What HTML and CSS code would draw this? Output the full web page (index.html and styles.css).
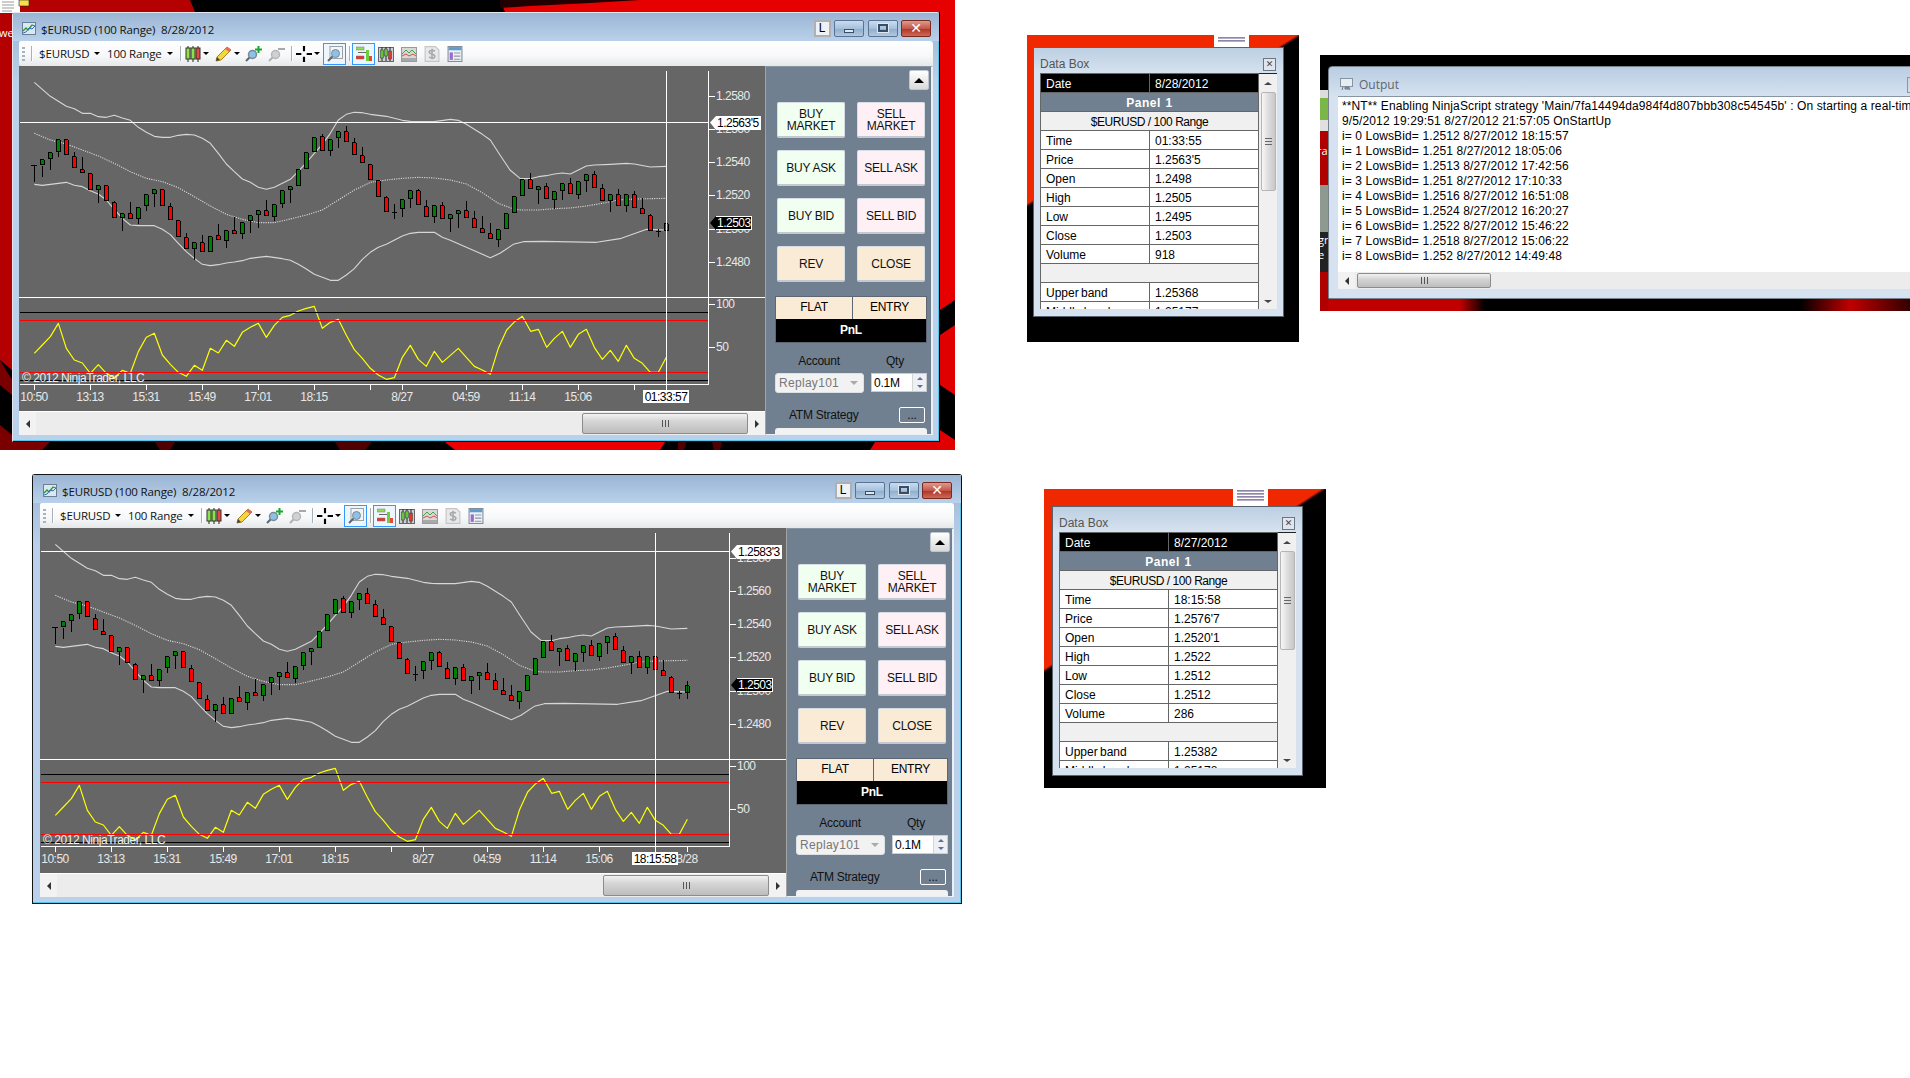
FILE: index.html
```html
<!DOCTYPE html>
<html lang="en">
<head>
<meta charset="utf-8">
<title>NinjaTrader charts</title>
<link rel="stylesheet" href="styles.css">
</head>
<body>
<svg class="defs" aria-hidden="true">
  <defs>
    <g id="series">
      <path class="band" d="M103 247L127 268 151 289 199 319 223 326 247 340 271 340 295 350 319 352 343 346 367 354 391 361 415 382 439 397 463 409 487 412 511 412 535 406 559 403 583 405 607 415 631 430 655 460 679 492 703 515 727 537 751 547 775 562 799 568 823 562 847 550 871 538 895 514 919 488 943 460 967 433 991 400 1015 360 1039 343 1063 337 1087 338 1111 343 1135 346 1159 349 1183 355 1207 361 1231 364 1255 365 1303 365 1351 358 1375 361 1399 373 1423 388 1447 403 1471 420 1500 465 1530 510 1560 535 1591 536 1615 530 1639 527 1663 522 1687 519 1711 522 1735 510 1759 498 1783 495 1831 493 1879 490 1903 492 1951 501 1999 499"/>
      <path class="band mid" d="M103 400L151 420 199 432 247 450 295 468 343 490 391 515 439 535 487 545 535 563 583 590 631 618 679 643 727 658 775 668 823 668 871 657 919 645 967 630 1015 600 1063 570 1111 547 1159 540 1207 535 1255 532 1303 534 1351 540 1399 552 1447 578 1495 610 1543 628 1567 630 1615 630 1663 626 1711 624 1759 618 1807 610 1855 600 1903 597 1999 595"/>
      <path class="band" d="M103 553L127 556 151 553 199 547 223 556 247 560 271 572 295 582 319 600 343 628 367 655 391 675 415 677 463 677 487 688 511 704 535 730 559 755 583 775 607 793 631 797 655 794 679 789 703 786 727 782 751 775 799 769 847 776 871 781 895 793 919 807 943 823 967 832 991 841 1015 841 1039 825 1063 806 1087 778 1111 757 1135 742 1159 733 1207 708 1231 700 1255 697 1303 697 1327 712 1351 721 1399 742 1447 763 1471 773 1500 760 1540 733 1570 725 1630 724 1790 727 1860 716 1940 688 1998 690"/>
      <path class="wick" d="M103 497V545M94 497h18M127 497V530M151 478V510M175 457V470M223 457V469M247 472V508M295 571V608M343 604V607M367 655V692M391 606V640M415 658V672M439 619V632M463 583V620M511 610V619M559 700V712M583 748V780M607 705V727M655 672V706M679 724V744M703 651V691M727 703V717M751 664V698M775 646V683M799 600V631M823 652V664M847 613V624M871 571V608M967 403V409M991 454V468M1015 415V444M1039 379V394M1063 415V427M1087 442V466M1159 588V592M1183 613V656M1175 638h17M1207 628V650M1231 598V623M1255 567V571M1279 600V619M1303 652V668M1327 606V616M1351 658V696M1375 643V684M1399 604V631M1423 633V655M1447 649V685M1471 670V700M1495 721V740M1591 519V538M1615 571V612M1639 550V559M1663 601V628M1687 574V600M1711 535V550M1735 586V597M1759 544V576M1783 514V523M1807 553V565M1831 604V636M1855 568V583M1879 619V636M1903 574V583M1927 595V625M1951 643V646M1975 688V710M1967 694h16"/>
      <path class="body up" d="M121 479h12v16h-12zM145 458h12v18h-12zM169 419h12v36h-12zM289 557h12v12h-12zM361 641h12v12h-12zM409 623h12v33h-12zM433 584h12v33h-12zM457 569h12v12h-12zM577 728h12v18h-12zM625 710h12v45h-12zM673 692h12v30h-12zM721 668h12v33h-12zM745 647h12v15h-12zM769 632h12v12h-12zM817 614h12v36h-12zM841 572h12v39h-12zM865 560h12v9h-12zM889 509h12v48h-12zM913 458h12v48h-12zM937 413h12v42h-12zM985 419h12v33h-12zM1009 395h12v18h-12zM1201 599h12v27h-12zM1225 572h12v24h-12zM1297 617h12v33h-12zM1345 644h12v12h-12zM1369 632h12v9h-12zM1489 689h12v30h-12zM1513 641h12v45h-12zM1537 590h12v48h-12zM1561 539h12v48h-12zM1609 560h12v9h-12zM1657 575h12v24h-12zM1681 551h12v21h-12zM1729 545h12v39h-12zM1753 524h12v18h-12zM1825 584h12v18h-12zM1873 584h12v33h-12zM1993 671h12v21h-12z"/>
      <path class="body down" d="M193 419h12v45h-12zM217 470h12v33h-12zM241 509h12v9h-12zM265 521h12v48h-12zM313 557h12v45h-12zM337 608h12v45h-12zM385 641h12v15h-12zM481 569h12v48h-12zM505 620h12v39h-12zM529 662h12v48h-12zM553 713h12v33h-12zM601 728h12v27h-12zM649 707h12v12h-12zM697 692h12v9h-12zM793 632h12v15h-12zM961 410h12v42h-12zM1033 395h12v30h-12zM1057 428h12v36h-12zM1081 467h12v21h-12zM1105 494h12v45h-12zM1129 542h12v48h-12zM1153 593h12v42h-12zM1249 572h12v42h-12zM1273 620h12v30h-12zM1321 617h12v39h-12zM1393 632h12v21h-12zM1417 656h12v27h-12zM1441 686h12v12h-12zM1465 701h12v15h-12zM1585 539h12v27h-12zM1633 560h12v36h-12zM1705 551h12v30h-12zM1777 524h12v39h-12zM1801 566h12v36h-12zM1849 584h12v33h-12zM1897 584h12v39h-12zM1921 626h12v15h-12zM1945 647h12v45h-12z"/>
      <path class="rsi" transform="translate(0 840)" d="M103 220L127 195 151 170 175 130 199 205 223 240 247 249 271 280 295 254 319 280 343 294 367 271 391 280 415 215 439 172 463 160 487 225 511 253 535 277 559 289 583 256 607 271 631 205 655 219 679 181 703 199 727 157 751 142 775 130 799 172 823 136 847 112 871 106 895 93 919 85 943 79 967 145 991 127 1015 118 1039 166 1063 209 1087 235 1111 265 1135 285 1159 298 1183 293 1207 232 1231 196 1255 238 1279 259 1303 214 1327 247 1351 226 1375 205 1399 232 1423 259 1447 270 1471 283 1495 205 1520 150 1544 125 1567 109 1592 154 1615 148 1640 202 1663 175 1687 154 1711 202 1735 163 1759 148 1783 202 1807 238 1831 211 1855 244 1879 196 1903 235 1927 250 1951 277 1975 277 1999 232"/>
    </g>
    <g id="chart-frame">
      <path class="ln-white" d="M0 231.5H746M689.5 5V318.5H1M690 30.5h6M690 96.5h6M690 129.5h6M690 196.5h6M690 63.5h6M690 163.5h6M690 238.5h6M690 281.5h6M15.5 318v6M71.5 318v6M127.5 318v6M183.5 318v6M239.5 318v6M295.5 318v6M351.5 318v6M383.5 318v6M447.5 318v6M503.5 318v6M559.5 318v6M615.5 318v6"/>
      <path class="ln-black" d="M1 246.5H689M1 314.5H689"/>
      <path class="ln-red" d="M1 254.5H689M1 306.5H689"/>
    </g>
    <symbol id="ic-title" viewBox="0 0 14 13"><rect x=".5" y=".5" width="13" height="12" fill="#dce7f2" stroke="#6a7f95"/><path d="M1 9l3-3 2 2 4-5 3 1" fill="none" stroke="#2a9a30" stroke-width="1.3"/><path d="M1 11l3-1 3-4 3 1 3-3" fill="none" stroke="#2e6fc0"/></symbol>
    <symbol id="ic-candles" viewBox="0 0 16 16"><path d="M3 0v16M8 0v16M13 0v16" stroke="#222"/><rect x="1" y="2" width="4" height="11" fill="#8be24a" stroke="#333"/><rect x="6" y="2" width="4" height="11" fill="#8be24a" stroke="#333"/><rect x="11" y="2" width="4" height="11" fill="#e5493c" stroke="#333"/></symbol>
    <symbol id="ic-pencil" viewBox="0 0 17 16"><path d="M1 15l1-4L12 1l4 3L6 14z" fill="#f6d73a" stroke="#a5812a"/><path d="M12 1l4 3-2 2-4-3z" fill="#e56a5a"/><path d="M1 15l1-4 3 3z" fill="#444"/></symbol>
    <symbol id="ic-zoomin" viewBox="0 0 17 16"><circle cx="7.500" cy="8.500" r="4" fill="#8fc0e6" stroke="#7c8a96" stroke-width="1.500"/><path d="M4.500 11.500L1 15" stroke="#5c6770" stroke-width="2"/><path d="M13.500 0v7M10 3.500h7" stroke="#16a830" stroke-width="2"/></symbol>
    <symbol id="ic-zoomout" viewBox="0 0 17 16"><circle cx="7.500" cy="8.500" r="4" fill="#cfd2d4" stroke="#b5b8ba" stroke-width="1.500"/><path d="M4.500 11.500L1 15" stroke="#b0b0b0" stroke-width="2"/><path d="M10 3h7" stroke="#a8a8a8" stroke-width="2"/></symbol>
    <symbol id="ic-cross" viewBox="0 0 15 15"><path d="M7.500 0v5M7.500 10v5M0 7.500h5M10 7.500h5" stroke="#000" stroke-width="2"/></symbol>
    <symbol id="ic-mag" viewBox="0 0 16 16"><rect x="3" y=".5" width="12.500" height="12" fill="#f2f4f6" stroke="#9aa2aa"/><circle cx="8.500" cy="7.500" r="4" fill="#8fc0e6" stroke="#7c8a96"/><path d="M5.500 10.500L1 15" stroke="#5c6770" stroke-width="2"/></symbol>
    <symbol id="ic-orders" viewBox="0 0 16 16"><rect x="0" y="1" width="8" height="3" fill="#8be24a" stroke="#777" stroke-width=".5"/><rect x="0" y="10" width="8" height="3" fill="#e5352c" stroke="#777" stroke-width=".5"/><path d="M2 6.500h9" stroke="#666"/><rect x="10" y="4" width="3" height="11" fill="#6ccf40"/><rect x="13" y="10" width="3" height="5" fill="#e5493c"/></symbol>
    <symbol id="ic-candles2" viewBox="0 0 16 16"><rect x=".5" y="1.500" width="15" height="14" fill="#ccd0d4" stroke="#666"/><path d="M4 1v14M8 1v14M12 1v14" stroke="#222"/><rect x="2.500" y="4" width="3" height="8" fill="#62c63a" stroke="#333" stroke-width=".5"/><rect x="6.500" y="3" width="3" height="7" fill="#62c63a" stroke="#333" stroke-width=".5"/><rect x="10.500" y="5" width="3" height="8" fill="#e5352c" stroke="#333" stroke-width=".5"/></symbol>
    <symbol id="ic-area" viewBox="0 0 16 16"><rect x=".5" y="1.500" width="15" height="14" fill="#d8d8d8" stroke="#9a9a9a"/><path d="M1 8l4-4 3 3 3-3 4 4" fill="none" stroke="#3ea83e"/><path d="M1 10l4-2 3 2 4-2 3 2" fill="none" stroke="#d0524a"/><rect x="1" y="12" width="14" height="3" fill="#a9a9a9"/></symbol>
    <symbol id="ic-dollar" viewBox="0 0 13 14"><path d="M.5.500h9l3 3v10H.500z" fill="#e9e9e9" stroke="#c5c5c5"/><path d="M9 4.500C8 3.500 4 3.500 4 5.500s5 1 5 3.500-4 1.500-5 .5M6.500 2.500v9" fill="none" stroke="#a9a9a9" stroke-width="1.400"/></symbol>
    <symbol id="ic-table" viewBox="0 0 14 15"><rect x=".5" y=".5" width="13" height="14" fill="#eef1f5" stroke="#7f8c99"/><rect x="1" y="1" width="12" height="3" fill="#5f9ccb"/><rect x="2" y="6" width="3" height="7" fill="#9a6ad0"/><path d="M6 6.500h6M6 9.500h6M6 12.500h6" stroke="#8a97a5"/></symbol>
    <symbol id="ic-output" viewBox="0 0 13 13"><rect x=".5" y=".5" width="12" height="8" fill="#e7edf3" stroke="#8795a3"/><path d="M3 9l-1 3M8 9l2 3M5 9h4v2H5z" fill="#8795a3" stroke="#6f7c88"/></symbol>
  </defs>
</svg>

<div class="desktop">
  <svg class="desktop-art" width="955" height="450" viewBox="0 0 955 450" aria-hidden="true">
    <rect width="955" height="450" fill="#000"/>
    <path d="M0 0H190L195 12H12V370L0 360z" fill="#b40000"/>
    <path d="M0 360L12 380V395L0 385zM0 425L12 435V442H50L42 450H0z" fill="#7a0000"/>
    <path d="M500 0H955V300L940 310V12H505z" fill="#e60000"/>
    <path d="M500 0H640L590 3 530 6 500 8z" fill="#200000"/>
    <path d="M940 335L955 325V395L940 385zM940 430L955 440V450H870L875 442H940z" fill="#e00000"/>
    <path d="M445 442H665L660 450H455z" fill="#ec0000"/>
    <path d="M155 442H175L170 450H160zM335 442H372L365 450H340zM678 442H686L684 450H678zM712 442H722L720 450H714z" fill="#500000"/>
    <rect x="0" y="0" width="20" height="13" fill="#fff"/>
    <path d="M2 2h12M2 5h12M2 8h12M2 11h10" stroke="#9a9a9a"/>
    <rect x="19" y="0" width="10" height="6" fill="#f6e04a" stroke="#222" stroke-width=".6"/>
  </svg>
  <span class="desk-we">we</span>
</div>

<section class="win win-a">
  <header class="win-title">
    <svg class="ti-ic"><use href="#ic-title"/></svg>
    <span class="win-name">$EURUSD (100 Range)&nbsp; 8/28/2012</span>
    <span class="win-l">L</span>
    <span class="cap"><i class="cap-min"></i></span>
    <span class="cap"><i class="cap-max"></i></span>
    <span class="cap cap-close">✕</span>
  </header>
  <div class="toolbar">
    <i class="grip"></i><i class="tsep ml6"></i>
    <span class="dd ml7 w68">$EURUSD<i class="arr"></i></span>
    <span class="dd w73">100 Range<i class="arr"></i></span>
    <i class="tsep"></i>
    <svg class="ic16 ml4"><use href="#ic-candles"/></svg><i class="arr ml2"></i>
    <svg class="ic17 ml6"><use href="#ic-pencil"/></svg><i class="arr ml2"></i>
    <svg class="ic17 ml5"><use href="#ic-zoomin"/></svg>
    <svg class="ic17 ml6"><use href="#ic-zoomout"/></svg>
    <i class="tsep ml6"></i>
    <svg class="ic16 ml4"><use href="#ic-cross"/></svg><i class="arr ml2"></i>
    <span class="tgl ml3"><svg class="ic16"><use href="#ic-mag"/></svg></span>
    <i class="tsep ml3"></i>
    <span class="tgl ml2"><svg class="ic16"><use href="#ic-orders"/></svg></span>
    <svg class="ic16 ml3"><use href="#ic-candles2"/></svg>
    <svg class="ic16 ml7"><use href="#ic-area"/></svg>
    <svg class="ic16 ml7"><use href="#ic-dollar"/></svg>
    <svg class="ic16 ml7"><use href="#ic-table"/></svg>
  </div>
  <div class="main">
    <div class="chart-col">
      <svg class="chart" width="746" height="345" viewBox="0 0 746 345">
        <use href="#series" transform="translate(-19 -66) scale(.33333)"/>
        <use href="#chart-frame"/>
        <path class="ln-white" d="M1 56.500H690M647.500 5V324"/>
        <g class="axis">
          <text x="697" y="34">1.2580</text><text x="697" y="67">1.2560</text><text x="697" y="100">1.2540</text><text x="697" y="133">1.2520</text><text x="697" y="167">1.2500</text><text x="697" y="200">1.2480</text>
          <text x="697" y="242">100</text><text x="697" y="285">50</text>
        </g>
        <text class="axis copy" x="3" y="316">© 2012 NinjaTrader, LLC</text>
        <g class="axis mid">
          <text x="15" y="335">10:50</text><text x="71" y="335">13:13</text><text x="127" y="335">15:31</text><text x="183" y="335">15:49</text><text x="239" y="335">17:01</text><text x="295" y="335">18:15</text><text x="383" y="335">8/27</text><text x="447" y="335">04:59</text><text x="503" y="335">11:14</text><text x="559" y="335">15:06</text>
        </g>
        <path class="tag-w" d="M691 56.500l6-6.500h45v14h-45z"/>
        <text class="tag-t" x="698" y="61">1.2563'5</text>
        <path class="tag-b" d="M691 157l6-7h35.500v14H697z"/>
        <path class="tag-o" d="M697 150.500H732.500V163.500H697"/>
        <text class="tag-tw" x="698" y="161">1.2503</text>
        <rect class="tag-w" x="624" y="324" width="46" height="13"/>
        <text class="tag-t mid" x="647" y="335">01:33:57</text>
      </svg>
      <div class="hscroll">
        <span class="sb-end"><i class="tri-l"></i></span>
        <span class="sb-track"><span class="sb-thumb"><i class="sb-grip"></i></span></span>
        <span class="sb-end"><i class="tri-r"></i></span>
      </div>
    </div>
    <aside class="panel">
      <div class="panel-top"><span class="up"><i class="tri-u"></i></span></div>
      <div class="orders">
        <span class="ord buy">BUY<br>MARKET</span><span class="ord sell">SELL<br>MARKET</span>
        <span class="ord buy">BUY ASK</span><span class="ord sell">SELL ASK</span>
        <span class="ord buy">BUY BID</span><span class="ord sell">SELL BID</span>
        <span class="ord neu">REV</span><span class="ord neu">CLOSE</span>
      </div>
      <div class="pos"><span class="pos-c">FLAT</span><span class="pos-c">ENTRY</span><span class="pnl">PnL</span></div>
      <div class="lbls"><span class="lb-acc">Account</span><span class="lb-qty">Qty</span></div>
      <div class="inputs">
        <span class="combo">Replay101<i class="tri-g"></i></span>
        <span class="qty">0.1M<span class="spin"><i class="tri-su"></i><i class="tri-sd"></i></span></span>
      </div>
      <div class="atm"><span>ATM Strategy</span><span class="dots">...</span></div>
      <div class="atm-box"></div>
    </aside>
  </div>
</section>

<section class="win win-b">
  <header class="win-title">
    <svg class="ti-ic"><use href="#ic-title"/></svg>
    <span class="win-name">$EURUSD (100 Range)&nbsp; 8/28/2012</span>
    <span class="win-l">L</span>
    <span class="cap"><i class="cap-min"></i></span>
    <span class="cap"><i class="cap-max"></i></span>
    <span class="cap cap-close">✕</span>
  </header>
  <div class="toolbar">
    <i class="grip"></i><i class="tsep ml6"></i>
    <span class="dd ml7 w68">$EURUSD<i class="arr"></i></span>
    <span class="dd w73">100 Range<i class="arr"></i></span>
    <i class="tsep"></i>
    <svg class="ic16 ml4"><use href="#ic-candles"/></svg><i class="arr ml2"></i>
    <svg class="ic17 ml6"><use href="#ic-pencil"/></svg><i class="arr ml2"></i>
    <svg class="ic17 ml5"><use href="#ic-zoomin"/></svg>
    <svg class="ic17 ml6"><use href="#ic-zoomout"/></svg>
    <i class="tsep ml6"></i>
    <svg class="ic16 ml4"><use href="#ic-cross"/></svg><i class="arr ml2"></i>
    <span class="tgl ml3"><svg class="ic16"><use href="#ic-mag"/></svg></span>
    <i class="tsep ml3"></i>
    <span class="tgl ml2"><svg class="ic16"><use href="#ic-orders"/></svg></span>
    <svg class="ic16 ml3"><use href="#ic-candles2"/></svg>
    <svg class="ic16 ml7"><use href="#ic-area"/></svg>
    <svg class="ic16 ml7"><use href="#ic-dollar"/></svg>
    <svg class="ic16 ml7"><use href="#ic-table"/></svg>
  </div>
  <div class="main">
    <div class="chart-col">
      <svg class="chart" width="746" height="345" viewBox="0 0 746 345">
        <use href="#series" transform="translate(-19 -66) scale(.33333)"/>
        <path class="wick-x" d="M647.500 153V171"/>
        <use href="#chart-frame"/>
        <path class="ln-white" d="M1 23.500H690M615.500 5V324M647.500 318v6"/>
        <g class="axis">
          <text x="697" y="34">1.2580</text><text x="697" y="67">1.2560</text><text x="697" y="100">1.2540</text><text x="697" y="133">1.2520</text><text x="697" y="167">1.2500</text><text x="697" y="200">1.2480</text>
          <text x="697" y="242">100</text><text x="697" y="285">50</text>
        </g>
        <text class="axis copy" x="3" y="316">© 2012 NinjaTrader, LLC</text>
        <g class="axis mid">
          <text x="15" y="335">10:50</text><text x="71" y="335">13:13</text><text x="127" y="335">15:31</text><text x="183" y="335">15:49</text><text x="239" y="335">17:01</text><text x="295" y="335">18:15</text><text x="383" y="335">8/27</text><text x="447" y="335">04:59</text><text x="503" y="335">11:14</text><text x="559" y="335">15:06</text><text x="647" y="335">8/28</text>
        </g>
        <path class="tag-w" d="M691 23.500l6-6.500h45v14h-45z"/>
        <text class="tag-t" x="698" y="28">1.2583'3</text>
        <path class="tag-b" d="M691 157l6-7h35.500v14H697z"/>
        <path class="tag-o" d="M697 150.500H732.500V163.500H697"/>
        <text class="tag-tw" x="698" y="161">1.2503</text>
        <rect class="tag-w" x="592" y="324" width="46" height="13"/>
        <text class="tag-t mid" x="615" y="335">18:15:58</text>
      </svg>
      <div class="hscroll">
        <span class="sb-end"><i class="tri-l"></i></span>
        <span class="sb-track"><span class="sb-thumb"><i class="sb-grip"></i></span></span>
        <span class="sb-end"><i class="tri-r"></i></span>
      </div>
    </div>
    <aside class="panel">
      <div class="panel-top"><span class="up"><i class="tri-u"></i></span></div>
      <div class="orders">
        <span class="ord buy">BUY<br>MARKET</span><span class="ord sell">SELL<br>MARKET</span>
        <span class="ord buy">BUY ASK</span><span class="ord sell">SELL ASK</span>
        <span class="ord buy">BUY BID</span><span class="ord sell">SELL BID</span>
        <span class="ord neu">REV</span><span class="ord neu">CLOSE</span>
      </div>
      <div class="pos"><span class="pos-c">FLAT</span><span class="pos-c">ENTRY</span><span class="pnl">PnL</span></div>
      <div class="lbls"><span class="lb-acc">Account</span><span class="lb-qty">Qty</span></div>
      <div class="inputs">
        <span class="combo">Replay101<i class="tri-g"></i></span>
        <span class="qty">0.1M<span class="spin"><i class="tri-su"></i><i class="tri-sd"></i></span></span>
      </div>
      <div class="atm"><span>ATM Strategy</span><span class="dots">...</span></div>
      <div class="atm-box"></div>
    </aside>
  </div>
</section>

<section class="db db-a">
  <div class="handle handle-a"><i></i><i></i></div>
  <div class="db-win">
    <div class="db-title"><span>Data Box</span><span class="db-x">✕</span></div>
    <div class="db-body">
      <div class="db-clip">
        <table class="db-table">
          <tr class="r-date"><td>Date</td><td>8/28/2012</td></tr>
          <tr class="r-panel"><td colspan="2">Panel 1</td></tr>
          <tr class="r-inst"><td colspan="2">$EURUSD / 100 Range</td></tr>
          <tr><td>Time</td><td>01:33:55</td></tr>
          <tr><td>Price</td><td>1.2563'5</td></tr>
          <tr><td>Open</td><td>1.2498</td></tr>
          <tr><td>High</td><td>1.2505</td></tr>
          <tr><td>Low</td><td>1.2495</td></tr>
          <tr><td>Close</td><td>1.2503</td></tr>
          <tr><td>Volume</td><td>918</td></tr>
          <tr class="r-inst"><td colspan="2"></td></tr>
          <tr><td>Upper band</td><td>1.25368</td></tr>
          <tr><td>Middle band</td><td>1.25177</td></tr>
        </table>
      </div>
      <div class="vscroll"><i class="tri-us"></i><span class="v-thumb"><i></i></span><i class="tri-ds"></i></div>
    </div>
  </div>
</section>

<section class="db db-b">
  <div class="handle handle-b"><i></i><i></i><i></i><i></i></div>
  <div class="db-win">
    <div class="db-title"><span>Data Box</span><span class="db-x">✕</span></div>
    <div class="db-body">
      <div class="db-clip">
        <table class="db-table">
          <tr class="r-date"><td>Date</td><td>8/27/2012</td></tr>
          <tr class="r-panel"><td colspan="2">Panel 1</td></tr>
          <tr class="r-inst"><td colspan="2">$EURUSD / 100 Range</td></tr>
          <tr><td>Time</td><td>18:15:58</td></tr>
          <tr><td>Price</td><td>1.2576'7</td></tr>
          <tr><td>Open</td><td>1.2520'1</td></tr>
          <tr><td>High</td><td>1.2522</td></tr>
          <tr><td>Low</td><td>1.2512</td></tr>
          <tr><td>Close</td><td>1.2512</td></tr>
          <tr><td>Volume</td><td>286</td></tr>
          <tr class="r-inst"><td colspan="2"></td></tr>
          <tr><td>Upper band</td><td>1.25382</td></tr>
          <tr><td>Middle band</td><td>1.25178</td></tr>
        </table>
      </div>
      <div class="vscroll"><i class="tri-us"></i><span class="v-thumb"><i></i></span><i class="tri-ds"></i></div>
    </div>
  </div>
</section>

<section class="out">
  <div class="out-side">
    <span class="s-grey"></span><span class="s-green"></span><span class="s-grey2"></span>
    <span class="s-red">ra</span><span class="s-pic"></span><span class="s-txt">gr<br>e</span><span class="s-red2"></span>
  </div>
  <div class="out-win">
    <div class="out-title">
      <svg class="out-ic"><use href="#ic-output"/></svg><span>Output</span><span class="out-x"></span>
    </div>
    <div class="out-body">
      <div class="out-text">**NT** Enabling NinjaScript strategy 'Main/7fa14494da984f4d807bbb308c54545b' : On starting a real-time
9/5/2012 19:29:51 8/27/2012 21:57:05 OnStartUp
i= 0 LowsBid= 1.2512 8/27/2012 18:15:57
i= 1 LowsBid= 1.251 8/27/2012 18:05:06
i= 2 LowsBid= 1.2513 8/27/2012 17:42:56
i= 3 LowsBid= 1.251 8/27/2012 17:10:33
i= 4 LowsBid= 1.2516 8/27/2012 16:51:08
i= 5 LowsBid= 1.2524 8/27/2012 16:20:27
i= 6 LowsBid= 1.2522 8/27/2012 15:46:22
i= 7 LowsBid= 1.2518 8/27/2012 15:06:22
i= 8 LowsBid= 1.252 8/27/2012 14:49:48</div>
      <div class="out-scroll"><span class="sb-end"><i class="tri-l"></i></span><span class="out-thumb"><i class="sb-grip"></i></span></div>
    </div>
  </div>
</section>
</body>
</html>
```
FILE: styles.css
```css
* { box-sizing: border-box; }
html, body { margin: 0; padding: 0; }
body {
  position: relative;
  width: 1910px;
  height: 1078px;
  overflow: hidden;
  background: #fff;
  font: 12px/1.2 "Liberation Sans", Arial, sans-serif;
  color: #000;
}
i { display: block; font-style: normal; }
.defs { position: absolute; width: 0; height: 0; }

/* desktop behind the first window */
.desktop { position: absolute; left: 0; top: 0; width: 955px; height: 450px; overflow: hidden; }
.desktop-art { display: block; }
.desk-we { position: absolute; left: -1px; top: 25px; color: #fff; font: 11px "Open Sans", sans-serif; }

/* chart windows */
.win {
  position: absolute;
  height: 430px;
  display: flex;
  flex-direction: column;
  background: linear-gradient(180deg, #9ab5d4 0, #b9d1ea 70px, #b9d1ea 100%);
  border: 1px solid #151515;
  border-right-color: #0d0d0d;
  box-shadow: inset -1px -1px 0 #58c4e8;
  border-radius: 3px 3px 0 0;
}
.win-a { left: 12px; top: 12px; width: 928px; padding: 0 6px 6px; border-top-color: #e4e8ee; border-left-color: #e4e8ee; }
.win-b { left: 32px; top: 474px; width: 930px; padding: 0 7px 6px; }

.win-title { height: 28px; display: flex; align-items: center; margin: 0 -6px; padding: 0 8px 0 9px; background: linear-gradient(180deg, #9ab5d4, #b9d1ea); }
.win-b .win-title { margin: 0 -7px; padding: 0 9px 0 10px; }
.ti-ic { width: 14px; height: 13px; margin-top: 3px; }
.win-name { margin-left: 5px; margin-top: 4px; font: 11.500px "Open Sans", sans-serif; letter-spacing: -.15px; color: #111; }
.win-l { margin-left: auto; width: 17px; height: 17px; margin-top: 2px; border: 2px solid #b0b0b0; background: #eef2f6; text-align: center; font: 12px/13px "Liberation Sans", sans-serif; }
.cap { width: 30px; height: 17px; margin: 2px 0 0 3.500px; border: 1px solid #5a7390; border-radius: 2px; background: linear-gradient(180deg, #c9dcf0 0, #a5c1de 50%, #8eaccb 51%, #b0c9e2 100%); display: flex; align-items: center; justify-content: center; }
.cap-min { width: 10px; height: 4px; margin-top: 6px; background: #dfe8f1; border: 1px solid #3a4d62; }
.cap-max { width: 10px; height: 8px; background: transparent; border: 2px solid #3a4d62; outline: 1px solid #dfe8f1; }
.cap-close { background: linear-gradient(180deg, #dd9a8e 0, #c4574a 50%, #ad3322 51%, #cc6a58 100%); border-color: #7b2a20; color: #fff; font: 700 14px/15px "DejaVu Sans", sans-serif; }

.toolbar { height: 25px; flex: none; display: flex; align-items: center; padding-left: 3px; background: linear-gradient(180deg, #fff 0, #f7f8fa 60%, #e6e7e9 100%); border-radius: 2px 3px 0 2px; font: 11.500px "Open Sans", sans-serif; letter-spacing: -.15px; color: #111; white-space: nowrap; }
.grip { width: 3px; height: 14px; background: repeating-linear-gradient(180deg, #a9b3bd 0 2px, transparent 2px 4px); }
.tsep { width: 1px; height: 15px; background: #a8b0b8; box-shadow: 1px 0 0 #fff; }
.dd { display: flex; align-items: center; justify-content: space-between; padding-right: 7px; }
.w68 { width: 68px; }
.w73 { width: 73px; }
.arr { width: 0; height: 0; border: 3px solid transparent; border-top: 3px solid #000; border-bottom: 0; }
.ml2 { margin-left: 2px; } .ml3 { margin-left: 3px; } .ml4 { margin-left: 4px; } .ml5 { margin-left: 5px; } .ml6 { margin-left: 6px; } .ml7 { margin-left: 7px; }
.ic16 { width: 16px; height: 16px; flex: none; }
.ic17 { width: 17px; height: 16px; flex: none; }
.tgl { width: 23px; height: 22px; flex: none; border: 1px solid #3399ff; display: flex; align-items: center; justify-content: center; background: #eef6fd; }

.main { flex: 1; display: flex; min-height: 0; }
.chart-col { width: 746px; display: flex; flex-direction: column; }
.chart { display: block; background: #666; flex: none; }
.band { fill: none; stroke: #e2e2e2; stroke-width: 3.300; stroke-linejoin: round; opacity: .9; }
.band.mid { stroke-dasharray: 3.500 3.500; stroke: #e6e6e6; }
.wick { fill: none; stroke: #000; stroke-width: 3; shape-rendering: crispEdges; }
.wick-x { stroke: #000; shape-rendering: crispEdges; }
.body { stroke: #000; stroke-width: 3; shape-rendering: crispEdges; }
.up { fill: #008000; }
.down { fill: #f00; }
.rsi { fill: none; stroke: #ff0; stroke-width: 3.600; stroke-linejoin: round; }
.ln-white { fill: none; stroke: #fff; shape-rendering: crispEdges; }
.ln-black { fill: none; stroke: #000; shape-rendering: crispEdges; }
.ln-red { fill: none; stroke: #f00; shape-rendering: crispEdges; }
.axis { fill: #e8e8e8; font: 12px "Liberation Sans", sans-serif; letter-spacing: -.5px; }
.axis.mid text, .mid { text-anchor: middle; }
.copy { fill: #f0f0f0; letter-spacing: -.45px; }
.tag-w { fill: #fff; }
.tag-b { fill: #000; stroke: none; }
.tag-o { fill: none; stroke: #fff; shape-rendering: crispEdges; }
.tag-t { fill: #000; font: 12px "Liberation Sans", sans-serif; letter-spacing: -.5px; }
.tag-tw { fill: #fff; font: 12px "Liberation Sans", sans-serif; letter-spacing: -.5px; }

.hscroll { flex: 1; display: flex; background: #ececec; border-top: 1px solid #fff; }
.sb-end { width: 17px; flex: none; display: flex; align-items: center; justify-content: center; background: #f2f2f2; }
.sb-track { flex: 1; display: flex; justify-content: flex-end; }
.sb-thumb, .out-thumb { width: 166px; margin: 1px 0; border: 1px solid #8c8c8c; border-radius: 2px; background: linear-gradient(180deg, #f2f2f2 0, #d4d4d4 40%, #cdcdcd 60%, #bdbdbd 100%); display: flex; align-items: center; justify-content: center; }
.sb-grip { width: 7px; height: 7px; background: repeating-linear-gradient(90deg, #555 0 1px, transparent 1px 3px); }
.tri-l { width: 0; height: 0; border: 4px solid transparent; border-left: 0; border-right: 4px solid #333; }
.tri-r { width: 0; height: 0; border: 4px solid transparent; border-right: 0; border-left: 4px solid #333; }

.panel { width: 168px; flex: none; display: flex; flex-direction: column; padding: 3px 4px 0 9px; background: #708090; border-left: 1px solid #a3a3a3; border-top: 1px solid #8795a3; border-right: 2px solid #eaf0f6; border-bottom: 1px solid #eaf0f6; overflow: hidden; font: 12px "Liberation Sans", sans-serif; letter-spacing: -.25px; }
.panel-top { display: flex; justify-content: flex-end; margin-right: -2px; }
.up { width: 20px; height: 20px; flex: none; background: linear-gradient(180deg, #fff, #d9d9d9); border: 1px solid #bfc6cd; border-radius: 2px; display: flex; align-items: center; justify-content: center; }
.tri-u { width: 0; height: 0; border: 5px solid transparent; border-top: 0; border-bottom: 5px solid #000; }
.orders { display: grid; grid-template-columns: 68px 68px; gap: 12px; margin: 12px 0 0 2px; }
.ord { height: 36px; display: flex; align-items: center; justify-content: center; text-align: center; line-height: 12px; border: 1px solid #d5dde5; border-bottom: 2px solid #c3c9cf; border-radius: 2px; color: #111; }
.buy { background: #f0fff0; }
.sell { background: #fff0f5; }
.neu { background: #faebd7; }
.pos { display: grid; grid-template-columns: 76px 1fr; width: 152px; margin-top: 14px; border: 1px solid #5c6773; }
.pos-c { height: 22px; line-height: 21px; text-align: center; background: #faebd7; }
.pos-c + .pos-c { border-left: 1px solid #5c6773; }
.pnl { grid-column: 1 / 3; height: 23px; line-height: 23px; text-align: center; background: #000; color: #fff; font-weight: 700; }
.lbls { display: flex; margin-top: 10px; height: 16px; line-height: 16px; color: #111; }
.lb-acc { width: 88px; text-align: center; }
.lb-qty { width: 64px; text-align: center; }
.inputs { display: flex; gap: 7px; margin-top: 4px; width: 152px; }
.combo { width: 89px; height: 20px; padding-left: 3px; display: flex; align-items: center; justify-content: space-between; background: #f2f2f2; color: #777; border: 1px solid #dce1e6; border-radius: 3px; letter-spacing: .3px; }
.tri-g { width: 0; height: 0; margin-right: 5px; border: 4px solid transparent; border-bottom: 0; border-top: 4px solid #aaa; }
.qty { width: 56px; height: 19px; padding-left: 2px; display: flex; align-items: center; justify-content: space-between; background: #fff; border: 1px solid #c8ced4; }
.spin { width: 14px; height: 17px; display: flex; flex-direction: column; align-items: center; justify-content: space-around; background: #eef0f3; border-left: 1px solid #d5d5d5; }
.tri-su { width: 0; height: 0; border: 3px solid transparent; border-top: 0; border-bottom: 3px solid #5d6f9e; }
.tri-sd { width: 0; height: 0; border: 3px solid transparent; border-bottom: 0; border-top: 3px solid #5d6f9e; }
.atm { display: flex; align-items: center; justify-content: space-between; height: 16px; margin: 14px 2px 0 14px; color: #111; }
.dots { width: 26px; height: 16px; text-align: center; line-height: 14px; background: #708090; border: 1px solid #fff; border-radius: 2px; }
.atm-box { height: 12px; width: 152px; margin-top: 5px; background: #f2f2f2; border-radius: 3px 3px 0 0; }

/* data boxes */
.db { position: absolute; }
.db-a { left: 1027px; top: 35px; width: 272px; height: 307px; padding: 12px 0 0 6px; background: linear-gradient(148deg, #f02800 143px, #000 146px); }
.db-b { left: 1044px; top: 489px; width: 282px; height: 299px; padding: 17px 0 0 8px; background: linear-gradient(147deg, #f02800 151px, #000 154px); }
.handle { position: absolute; background: #fff; width: 35px; padding: 2px 4px 0; display: flex; flex-direction: column; }
.handle i { height: 1px; background: #8d86a8; box-shadow: 0 1px 0 #b3aec6; }
.handle-a { left: 187px; top: 0; height: 12px; gap: 2px; }
.handle-b { left: 189px; top: 0; height: 17px; gap: 2px; padding-top: 1px; }
.db-win { width: 251px; height: 270px; padding: 0 6px 7px; display: flex; flex-direction: column; background: linear-gradient(180deg, #bccfe2 0, #d6e2ef 25px, #d6e2ef 100%); border: 1px solid #59636d; }
.db-title { height: 25px; flex: none; display: flex; align-items: center; justify-content: space-between; padding: 7px 1px 0 0; color: #555; font: 12px "Liberation Sans", sans-serif; }
.db-x { width: 13px; height: 13px; border: 1px solid #6a7682; background: #dfe6ee; color: #444; font: 700 9px/11px "DejaVu Sans", sans-serif; text-align: center; }
.db-body { flex: 1; display: flex; min-height: 0; width: 237px; }
.db-clip { width: 219px; height: 236px; overflow: hidden; background: #fff; }
.db-table { width: 219px; table-layout: fixed; border-collapse: collapse; word-spacing: -1px; }
.db-table td { height: 19px; padding: 2px 5px 0; border: 1px solid #666; white-space: nowrap; }
.r-date td { background: #000; color: #fff; border-color: #666; }
.r-panel td { background: #708090; color: #fff; font-weight: 700; text-align: center; letter-spacing: .5px; word-spacing: 1px; }
.r-inst td { background: #f0f0f0; text-align: center; letter-spacing: -.45px; word-spacing: 0; }
.vscroll { width: 18px; flex: none; height: 236px; display: flex; flex-direction: column; align-items: center; background: #f0f0f0; border-top: 1px solid #222; }
.tri-us { width: 0; height: 0; margin-top: 8px; border: 4px solid transparent; border-top: 0; border-bottom: 3px solid #444; }
.tri-ds { width: 0; height: 0; margin-top: auto; margin-bottom: 6px; border: 4px solid transparent; border-bottom: 0; border-top: 3px solid #444; }
.v-thumb { width: 15px; height: 99px; margin-top: 7px; border: 1px solid #b5b5b5; border-radius: 2px; background: linear-gradient(90deg, #f7f7f7, #dcdcdc 50%, #c8c8c8); display: flex; align-items: center; justify-content: center; }
.v-thumb i { width: 7px; height: 7px; background: repeating-linear-gradient(180deg, #666 0 1px, transparent 1px 3px); }

/* output */
.out { position: absolute; left: 1320px; top: 55px; width: 590px; height: 256px; padding: 11px 0 0 8px; overflow: hidden; background: linear-gradient(90deg, #c00000 0, #c00000 140px, #000 165px, #000 480px, #c00000 530px, #300 590px) 0 100% / 100% 12px no-repeat, #000; }
.out-side { position: absolute; left: 0; top: 35px; width: 8px; height: 221px; display: flex; flex-direction: column; overflow: hidden; font: 11px/15px "Open Sans", sans-serif; color: #fff; }
.s-grey { height: 8px; background: #ddd; flex: none; }
.s-green { height: 22px; background: #7ab648; flex: none; }
.s-grey2 { height: 11px; background: #e0e0e0; flex: none; }
.s-red { height: 54px; background: #b00000; flex: none; line-height: 40px; margin-left: -3px; }
.s-pic { height: 47px; background: #8e9a90; flex: none; }
.s-txt { height: 40px; background: #222; flex: none; margin-left: -2px; }
.s-red2 { flex: 1; background: #b00000; }
.out-win { position: relative; width: 600px; height: 233px; padding: 0 0 9px 9px; display: flex; flex-direction: column; background: linear-gradient(180deg, #b9cde2 0, #d6e2ef 30px, #d6e2ef 100%); border: 1px solid #77818b; border-radius: 4px 0 0 0; }
.out-title { height: 29px; flex: none; display: flex; align-items: center; padding-top: 5px; color: #5b6670; font: 12px "Open Sans", sans-serif; margin-left: 2px; }
.out-ic { width: 13px; height: 13px; margin-right: 6px; }
.out-x { width: 16px; height: 16px; position: absolute; left: 578px; top: 10px; border: 1px solid #8a96a2; }
.out-body { flex: 1; display: flex; flex-direction: column; background: #fff; overflow: hidden; border-top: 1px solid #8795a3; }
.out-text { flex: 1; padding: 2px 0 0 4px; white-space: pre; font: 12px/15px "Liberation Sans", sans-serif; letter-spacing: .12px; overflow: hidden; }
.out-scroll { height: 17px; flex: none; display: flex; background: #ececec; margin-top: 1px; }
.out-thumb { width: 134px; margin: 1px 0 1px 2px; }
```
